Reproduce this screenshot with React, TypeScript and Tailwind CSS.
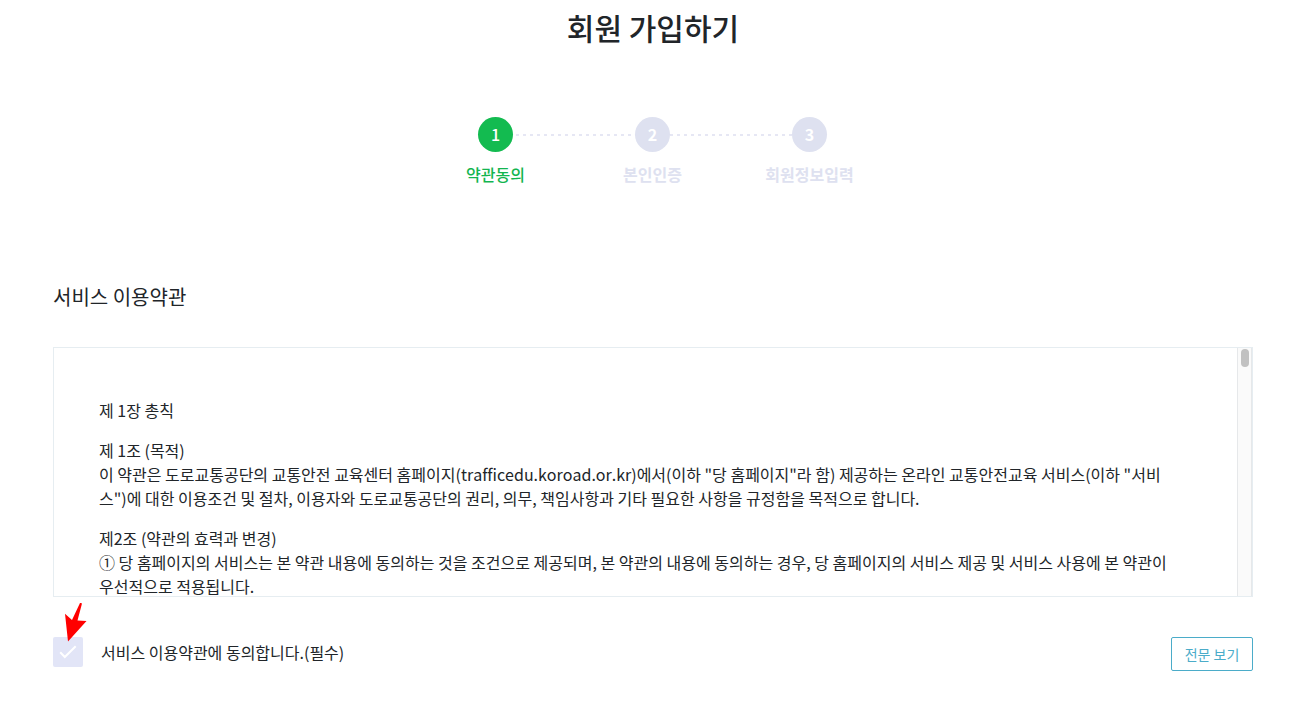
const steps = [
  { n: 1, label: '약관동의', active: true },
  { n: 2, label: '본인인증', active: false },
  { n: 3, label: '회원정보입력', active: false },
];

export default function App() {
  return (
    <main className="bg-white pt-[7px] pr-[44px] pb-10 pl-[53px] font-['Noto_Sans_CJK_KR',sans-serif] text-[#212529] [font-kerning:none] [font-variant-ligatures:none]">
      <h1 className="text-center text-[30px] leading-[40px] font-medium">회원 가입하기</h1>
      <ol className="relative mx-auto mt-[70px] flex w-fit pr-px">
        <li
          aria-hidden="true"
          className="absolute top-[17px] left-[99px] h-0.5 w-[276px] bg-[repeating-linear-gradient(to_right,#e6e7f4_0_3px,transparent_3px_7px)]"
        />
        {steps.map((s) => (
          <li key={s.n} className="relative flex w-[157px] flex-col items-center">
            <span
              className={`flex h-[35px] w-[35px] items-center justify-center rounded-full pb-px text-base leading-6 text-white ${s.active ? 'bg-[#13bb50] font-medium' : 'bg-[#dee1f0] font-bold'}`}
            >
              {s.n}
            </span>
            <span
              className={`mt-[10px] text-base leading-6 ${s.active ? 'font-medium text-[#13b550]' : 'font-bold text-[#dee1f0]'}`}
            >
              {s.label}
            </span>
          </li>
        ))}
      </ol>
      <section className="mt-[97px]">
        <h2 className="text-xl leading-7 font-normal">서비스 이용약관</h2>
        <div className="mt-9 flex min-h-[250px] border border-[#e6edf1]">
          <div className="flex-1 pt-[50px] pr-[54px] pl-[45px] text-base leading-6">
            <p className="mb-4">제 1장 총칙</p>
            <p className="mb-4">
              제 1조 (목적)
              <br />이 약관은 도로교통공단의 교통안전 교육센터 홈페이지(trafficedu.koroad.or.kr)에서(이하 "당 홈페이지"라 함) 제공하는 온라인 교통안전교육 서비스(이하 "서비스")에 대한 이용조건 및 절차, 이용자와 도로교통공단의 권리, 의무, 책임사항과 기타 필요한 사항을 규정함을 목적으로 합니다.
            </p>
            <p className="-mb-1">
              제2조 (약관의 효력과 변경)
              <br />① 당 홈페이지의 서비스는 본 약관 내용에 동의하는 것을 조건으로 제공되며, 본 약관의 내용에 동의하는 경우, 당 홈페이지의 서비스 제공 및 서비스 사용에 본 약관이 우선적으로 적용됩니다.
            </p>
          </div>
          <div className="w-[15px] border-x border-[#e6e8ea] bg-[#fafafa] pt-px pl-[3px]">
            <div className="h-[18px] w-2 rounded-full bg-[#c1c1c1]" />
          </div>
        </div>
        <div className="mt-10 flex items-start justify-between">
          <label className="relative flex items-center gap-[18px] text-base">
            <input type="checkbox" defaultChecked className="size-[30px] appearance-none rounded-[2px] bg-[#e2e5f7]" />
            <svg viewBox="0 0 30 30" className="absolute top-0 left-0 size-[30px]" fill="none" stroke="#fff" strokeWidth="2">
              <path d="M7.2 15.2l4.6 4.8L22.7 9.2" />
            </svg>
            <svg viewBox="0 0 22 40" className="absolute -top-[35px] left-3 h-10 w-[22px]" fill="#f00" aria-hidden="true">
              <path d="M15 1h1.6l.2 1.2L12.5 18.5l9 .5L3 39.5 0 11.8 7 18z" />
            </svg>
            서비스 이용약관에 동의합니다.(필수)
          </label>
          <button type="button" className="h-[34px] w-[82px] rounded-[2px] border border-[#4bacc9] pb-px text-sm text-[#4bacc9]">
            전문 보기
          </button>
        </div>
      </section>
    </main>
  );
}
